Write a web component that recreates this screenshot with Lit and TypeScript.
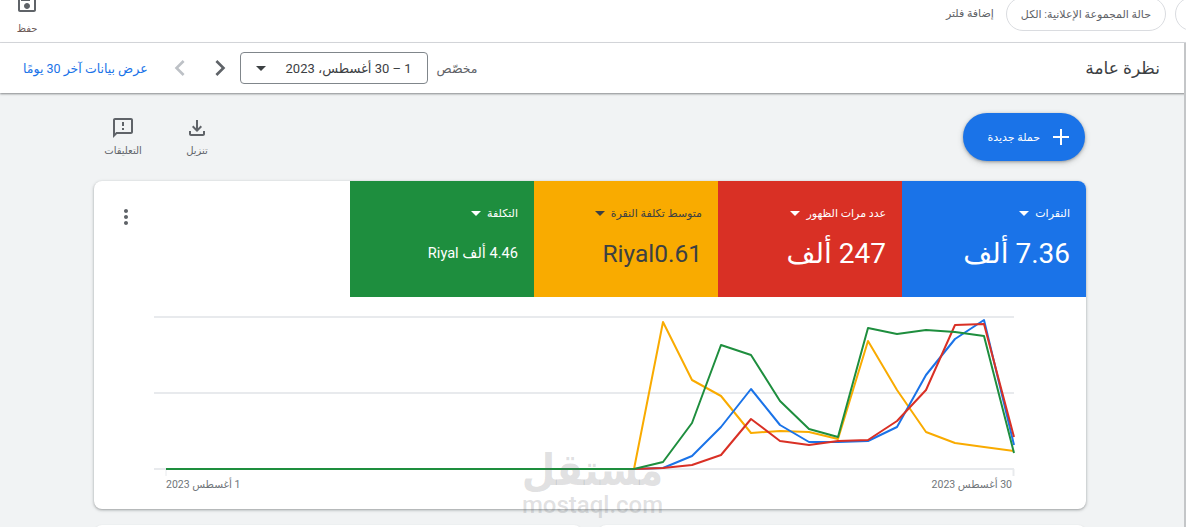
import { LitElement, html, css, svg } from 'lit';
import { customElement } from 'lit/decorators.js';

const STEP_X = [634, 663, 692, 721, 751, 780, 809, 838, 868, 897, 926, 955, 984, 1014];

const SERIES = [
  { color: '#f9ab00', ys: [469, 322, 380, 396, 433, 431, 432, 439, 341, 390, 432, 443, 447, 451] },
  { color: '#1a73e8', ys: [469, 468, 456, 427, 389, 425, 442, 442, 441, 427, 375, 339, 320, 445] },
  { color: '#d93025', ys: [469, 468, 465, 455, 419, 441, 445, 441, 440, 421, 390, 325, 324, 437] },
  { color: '#1e8e3e', ys: [469, 462, 423, 345, 355, 401, 429, 437, 328, 334, 330, 332, 336, 453] },
];

const TILES = [
  { label: 'النقرات', value: '7.36 ألف', cls: 'blue big' },
  { label: 'عدد مرات الظهور', value: '247 ألف', cls: 'red big' },
  { label: 'متوسط تكلفة النقرة', value: 'Riyal0.61', cls: 'yellow mid' },
  { label: 'التكلفة', value: '4.46 ألف Riyal', cls: 'green small' },
];

// chart svg starts at page x 94, y 297
const pts = (ys: number[]) => ys.map((y, i) => `${STEP_X[i] - 94},${y - 297}`).join(' ');

@customElement('app-root')
export class AppRoot extends LitElement {
  static styles = css`
    :host {
      display: block;
      height: 527px;
      overflow: hidden;
      background: #f1f3f4;
      font-family: Roboto, "DejaVu Sans", sans-serif;
      color: #5f6368;
      position: relative;
    }

    .topbar {
      height: 42px;
      background: #fff;
      border-bottom: 1px solid #dadce0;
      display: flex;
      align-items: flex-start;
      overflow: hidden;
    }
    .chip {
      height: 32px;
      margin-top: -3px;
      border: 1px solid #dadce0;
      border-radius: 17px;
      padding: 0 14px;
      display: flex;
      align-items: center;
      font-size: 11px;
      white-space: nowrap;
      flex: none;
    }
    .chip.cut { width: 40px; margin-right: -31px; margin-left: 9px; padding: 0; }
    .add-filter {
      font-size: 11px;
      margin: 7px 12px 0 0;
      white-space: nowrap;
    }
    .save {
      margin-right: auto;
      width: 24px;
      margin-left: 15px;
      display: flex;
      flex-direction: column;
      align-items: center;
      font-size: 10px;
      color: #6d5a58;
    }
    .save svg { margin-top: -9px; margin-bottom: 8px; }

    .header {
      height: 50px;
      background: #fff;
      box-shadow: 0 1px 2px rgba(60, 64, 67, 0.6);
      display: flex;
      align-items: center;
      padding: 0 26px 0 23px;
      position: relative;
    }
    .title {
      font-size: 17px;
      color: #3c4043;
    }
    .range-type {
      margin-right: auto;
      font-size: 12.5px;
      margin-left: 9px;
      white-space: nowrap;
    }
    .range {
      width: 188px;
      height: 32px;
      box-sizing: border-box;
      border: 1px solid #80868b;
      border-radius: 4px;
      display: flex;
      align-items: center;
      justify-content: space-between;
      padding: 0 15px 0 15px;
      font-size: 13px;
      color: #3c4043;
      white-space: nowrap;
    }
    .caret {
      width: 0;
      height: 0;
      border-left: 5px solid transparent;
      border-right: 5px solid transparent;
      border-top: 5px solid currentColor;
      flex: none;
    }
    .nav {
      display: flex;
      align-items: center;
      gap: 8px;
      margin-right: 4px;
    }
    .link {
      color: #1a73e8;
      font-size: 12.5px;
      margin-right: 16px;
      white-space: nowrap;
    }

    main { padding: 20px 100px 0 94px; }

    .actions {
      display: flex;
      align-items: flex-start;
      justify-content: space-between;
      height: 48px;
      margin-bottom: 20px;
      padding-right: 1px;
    }
    .fab {
      width: 122px;
      height: 48px;
      border-radius: 24px;
      background: #1a73e8;
      color: #fff;
      box-shadow: 0 1px 3px rgba(60, 64, 67, 0.4), 0 2px 6px rgba(60, 64, 67, 0.2);
      display: flex;
      align-items: center;
      font-size: 11px;
      padding-right: 12px;
      box-sizing: border-box;
      gap: 9px;
      white-space: nowrap;
    }
    .tools { display: flex; margin-left: -8px; margin-top: 3px; }
    .tool {
      width: 74px;
      display: flex;
      flex-direction: column;
      align-items: center;
      font-size: 10px;
      gap: 5px;
      white-space: nowrap;
    }

    .card {
      background: #fff;
      border-radius: 8px;
      box-shadow: 0 1px 2px rgba(60, 64, 67, 0.3), 0 1px 3px 1px rgba(60, 64, 67, 0.15);
      height: 328px;
      overflow: hidden;
    }
    .tiles { display: flex; height: 116px; }
    .tile {
      width: 184px;
      box-sizing: border-box;
      padding: 25px 16px 0;
      color: #fff;
      flex: none;
    }
    .tile.blue { background: #1a73e8; }
    .tile.red { background: #d93025; }
    .tile.yellow { background: #f9ab00; color: #3c4043; }
    .tile.green { background: #1e8e3e; }
    .tile-label {
      display: flex;
      align-items: center;
      gap: 6px;
      font-size: 11px;
      height: 14px;
      white-space: nowrap;
    }
    .tile-value {
      height: 42px;
      margin-top: 12px;
      display: flex;
      align-items: center;
      white-space: nowrap;
    }
    .big .tile-value { font-size: 28px; }
    .mid .tile-value { font-size: 24.5px; }
    .small .tile-value { font-size: 14.6px; }
    .more {
      margin-right: auto;
      margin-left: 20px;
      margin-top: 24px;
      align-self: flex-start;
      line-height: 0;
    }

    .chart { display: block; }
    .axis {
      display: flex;
      justify-content: space-between;
      padding: 0 74px 0 72px;
      font-size: 10.5px;
      color: #70757a;
      height: 14px;
      align-items: center;
    }

    .below {
      display: grid;
      grid-template-columns: 1fr 1fr;
      gap: 16px;
      margin-top: 16px;
    }
    .below div {
      height: 40px;
      background: #fff;
      border-radius: 8px;
      box-shadow: 0 1px 2px rgba(60, 64, 67, 0.3);
    }

    .gutter {
      position: absolute;
      top: 43px;
      right: 0;
      bottom: 0;
      width: 2px;
      background: #c4c6c8;
    }

    .watermark {
      position: absolute;
      left: 523px;
      top: 444px;
      width: 139px;
      color: rgba(95, 99, 104, 0.2);
      pointer-events: none;
      display: flex;
      flex-direction: column;
      align-items: center;
    }
    .watermark .ar {
      font-size: 44px;
      line-height: 51px;
      font-weight: 700;
      font-family: "DejaVu Sans", sans-serif;
      white-space: nowrap;
      transform: scaleX(0.88);
    }
    .watermark .en {
      font-size: 24px;
      line-height: 20px;
      font-weight: 500;
      direction: ltr;
      white-space: nowrap;
    }
  `;

  private tile(t: (typeof TILES)[number]) {
    return html`
      <div class="tile ${t.cls}">
        <div class="tile-label"><span>${t.label}</span><span class="caret"></span></div>
        <div class="tile-value">${t.value}</div>
      </div>
    `;
  }

  private chart() {
    const grid = [20, 96, 172];
    return html`
      <svg class="chart" width="992" height="180" viewBox="0 0 992 180">
        ${grid.map((y) => svg`<line x1="60" x2="920" y1=${y} y2=${y} stroke="#e8eaed" stroke-width="2" />`)}
        <line x1="72" x2="72" y1="172" y2="179" stroke="#e8eaed" />
        <line x1="919.5" x2="919.5" y1="172" y2="179" stroke="#e8eaed" stroke-width="2" />
        ${SERIES.map(
          (s) => svg`<polyline points=${pts(s.ys)} fill="none" stroke=${s.color} stroke-width="2" stroke-linejoin="round" />`,
        )}
        <line x1="72" x2="540" y1="172" y2="172" stroke="#1e8e3e" stroke-width="2" />
      </svg>
    `;
  }

  render() {
    return html`
      <div dir="rtl">
        <div class="topbar">
          <div class="chip cut"></div>
          <div class="chip">حالة المجموعة الإعلانية: الكل</div>
          <div class="add-filter">إضافة فلتر</div>
          <div class="save">
            <svg width="24" height="24" viewBox="0 0 24 24" fill="#5f6368">
              <path d="M17 3H5c-1.11 0-2 .9-2 2v14c0 1.1.89 2 2 2h14c1.1 0 2-.9 2-2V7l-4-4zm2 16H5V5h11.17L19 7.83V19zm-7-7c-1.66 0-3 1.34-3 3s1.34 3 3 3 3-1.34 3-3-1.34-3-3-3zM6 6h9v4H6z" />
            </svg>
            <span>حفظ</span>
          </div>
        </div>

        <div class="header">
          <div class="title">نظرة عامة</div>
          <div class="range-type">مخصّص</div>
          <div class="range">
            <span>1 – 30 أغسطس، 2023</span>
            <span class="caret"></span>
          </div>
          <div class="nav">
            <svg width="32" height="32" viewBox="0 0 24 24" fill="#5f6368"><path d="M8.59 16.59 13.17 12 8.59 7.41 10 6l6 6-6 6z" /></svg>
            <svg width="32" height="32" viewBox="0 0 24 24" fill="#bdc1c6"><path d="M15.41 7.41 10.83 12l4.58 4.59L14 18l-6-6 6-6z" /></svg>
          </div>
          <div class="link">عرض بيانات آخر 30 يومًا</div>
        </div>

        <main>
          <div class="actions">
            <div class="fab">
              <svg width="24" height="24" viewBox="0 0 24 24" fill="#fff"><path d="M20 13h-7v7h-2v-7H4v-2h7V4h2v7h7z" /></svg>
              <span>حملة جديدة</span>
            </div>
            <div class="tools">
              <div class="tool">
                <svg width="24" height="24" viewBox="0 0 24 24" fill="#5f6368"><path d="M18 15v3H6v-3H4v3c0 1.1.9 2 2 2h12c1.1 0 2-.9 2-2v-3h-2zm-1-4-1.41-1.41L13 12.17V4h-2v8.17L8.41 9.59 7 11l5 5 5-5z" /></svg>
                <span>تنزيل</span>
              </div>
              <div class="tool">
                <svg width="24" height="24" viewBox="0 0 24 24" fill="#5f6368"><path d="M20 2H4c-1.1 0-2 .9-2 2v18l4-4h14c1.1 0 2-.9 2-2V4c0-1.1-.9-2-2-2zm0 14H5.17L4 17.17V4h16v12zM11 12h2v2h-2zm0-6h2v4h-2z" /></svg>
                <span>التعليقات</span>
              </div>
            </div>
          </div>

          <section class="card">
            <div class="tiles">
              ${TILES.map((t) => this.tile(t))}
              <div class="more">
                <svg width="24" height="24" viewBox="0 0 24 24" fill="#5f6368"><path d="M12 8c1.1 0 2-.9 2-2s-.9-2-2-2-2 .9-2 2 .9 2 2 2zm0 2c-1.1 0-2 .9-2 2s.9 2 2 2 2-.9 2-2-.9-2-2-2zm0 6c-1.1 0-2 .9-2 2s.9 2 2 2 2-.9 2-2-.9-2-2-2z" /></svg>
              </div>
            </div>
            ${this.chart()}
            <div class="axis">
              <span>30 أغسطس 2023</span>
              <span>1 أغسطس 2023</span>
            </div>
          </section>

          <div class="below"><div></div><div></div></div>
        </main>

        <div class="gutter"></div>
        <div class="watermark">
          <div class="ar">مستقل</div>
          <div class="en">mostaql.com</div>
        </div>
      </div>
    `;
  }
}
